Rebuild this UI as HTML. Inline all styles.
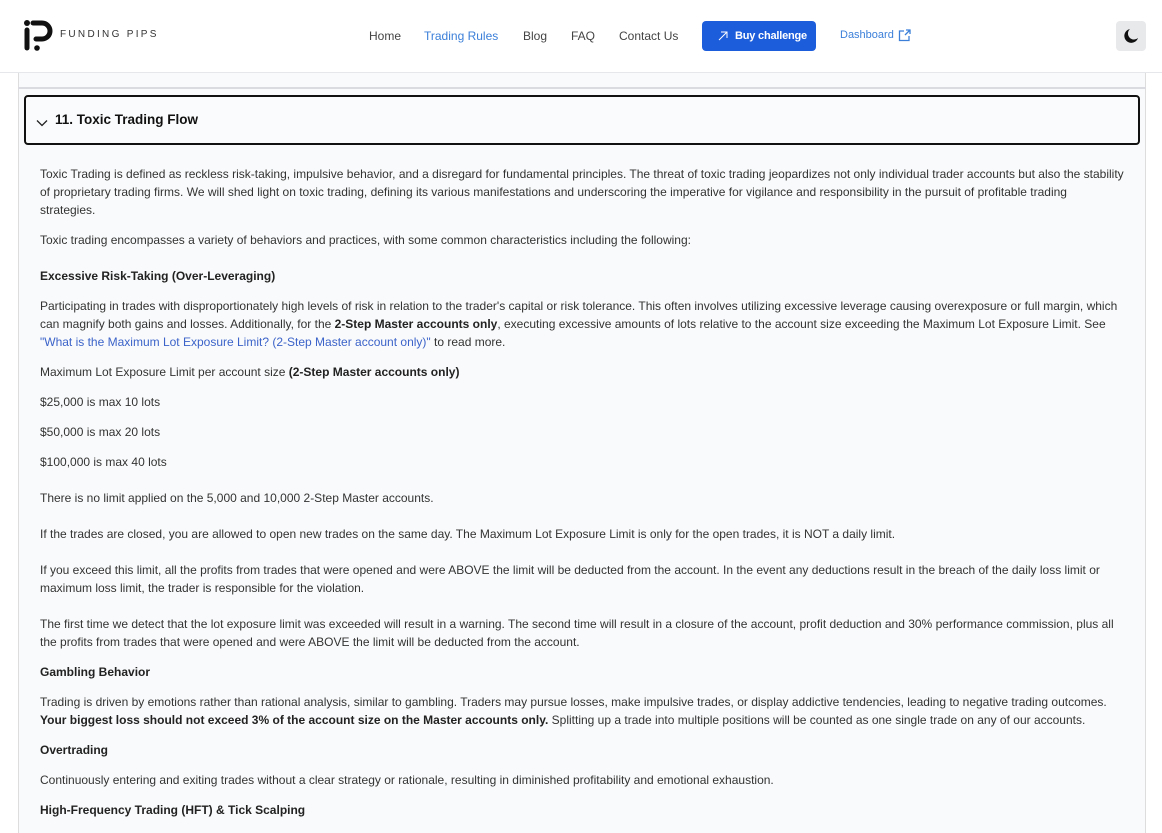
<!DOCTYPE html>
<html><head><meta charset="utf-8"><style>
*{margin:0;padding:0;box-sizing:border-box}
body{width:1162px;height:820px;overflow:hidden;background:#fff;font-family:"Liberation Sans",Arial,sans-serif;position:relative}
.hdr{position:absolute;left:0;top:0;width:1162px;height:73px;background:#fff;border-bottom:1px solid #e5e7eb}
.nav a{position:absolute;top:29px;font-size:12px;color:#444;text-decoration:none}
.box{position:absolute;left:18px;top:73px;width:1128px;height:760px;background:#f9fafb;border-left:1px solid #ddd;border-right:1px solid #ddd}
.line{position:absolute;left:18px;top:87px;width:1128px;height:2px;background:#d9dbe0}
.acc{position:absolute;left:24px;top:95px;width:1116px;height:50px;border:2px solid #111;border-radius:4px;background:#fafbfc}
.p{position:absolute;left:40px;font-size:12px;line-height:18px;color:#333;white-space:nowrap}
b{color:#222}
.lnk{color:#3b63c9}
</style></head><body>
<div class="hdr">
<svg style="position:absolute;left:24px;top:20px" width="30" height="32" viewBox="0 0 30 32">
<circle cx="3" cy="3" r="3" fill="#111"/>
<path d="M3 10 V28" stroke="#111" stroke-width="5" stroke-linecap="round" fill="none"/>
<path d="M9 3 H18 A8 8 0 0 1 18 19 H12" stroke="#111" stroke-width="5" stroke-linecap="round" fill="none"/>
<circle cx="13" cy="28" r="2.8" fill="#111"/>
</svg>
<div style="position:absolute;left:60px;top:29px;font-size:10px;letter-spacing:2.3px;color:#333">FUNDING PIPS</div>
<div class="nav">
<a style="left:369px">Home</a>
<a style="left:424px;color:#3b7fd9">Trading Rules</a>
<a style="left:523px">Blog</a>
<a style="left:571px">FAQ</a>
<a style="left:619px">Contact Us</a>
</div>
<div style="position:absolute;left:702px;top:21px;width:114px;height:30px;background:#1c5ddc;border-radius:4px;color:#fff;font-size:11px;font-weight:bold;line-height:30px;padding-left:33px;letter-spacing:-0.2px">Buy challenge</div>
<svg style="position:absolute;left:718px;top:31px" width="10" height="10" viewBox="0 0 10 10"><path d="M1 9 L9 1 M3 1 H9 V7" stroke="#fff" stroke-width="1" fill="none"/></svg>
<div style="position:absolute;left:840px;top:29px;font-size:11px;color:#3b7fd9">Dashboard</div>
<svg style="position:absolute;left:898px;top:29px" width="13" height="13" viewBox="0 0 13 13"><path d="M6 2 H1.5 V11.5 H11 V7 M7 6 L12 1 M8 1 H12 V5" stroke="#3b7fd9" stroke-width="1.3" fill="none"/></svg>
<div style="position:absolute;left:1116px;top:21px;width:30px;height:30px;background:#e8e9eb;border-radius:4px"></div>
<svg style="position:absolute;left:1123px;top:28px" width="16" height="16" viewBox="0 0 16 16"><path d="M7 1 A7 7 0 1 0 15 10 A6 6 0 0 1 7 1Z" fill="#111"/></svg>
</div>
<div class="box"></div>
<div class="line"></div>
<div class="acc">
<svg style="position:absolute;left:10px;top:22px" width="12" height="8" viewBox="0 0 12 8"><path d="M1 1.5 L6 6.5 L11 1.5" stroke="#222" stroke-width="1.3" fill="none"/></svg>
<div style="position:absolute;left:29px;top:15px;font-size:13.5px;font-weight:bold;color:#111">11. Toxic Trading Flow</div>
</div>
<div class="p" style="top:165px">Toxic Trading is defined as reckless risk-taking, impulsive behavior, and a disregard for fundamental principles. The threat of toxic trading jeopardizes not only individual trader accounts but also the stability<br>of proprietary trading firms. We will shed light on toxic trading, defining its various manifestations and underscoring the imperative for vigilance and responsibility in the pursuit of profitable trading<br>strategies.</div>
<div class="p" style="top:231px">Toxic trading encompasses a variety of behaviors and practices, with some common characteristics including the following:</div>
<div class="p" style="top:267px"><b>Excessive Risk-Taking (Over-Leveraging)</b></div>
<div class="p" style="top:297px">Participating in trades with disproportionately high levels of risk in relation to the trader's capital or risk tolerance. This often involves utilizing excessive leverage causing overexposure or full margin, which<br>can magnify both gains and losses. Additionally, for the <b>2-Step Master accounts only</b>, executing excessive amounts of lots relative to the account size exceeding the Maximum Lot Exposure Limit. See<br><span class="lnk">"What is the Maximum Lot Exposure Limit? (2-Step Master account only)"</span> to read more.</div>
<div class="p" style="top:363px">Maximum Lot Exposure Limit per account size <b>(2-Step Master accounts only)</b></div>
<div class="p" style="top:393px">$25,000 is max 10 lots</div>
<div class="p" style="top:423px">$50,000 is max 20 lots</div>
<div class="p" style="top:453px">$100,000 is max 40 lots</div>
<div class="p" style="top:489px">There is no limit applied on the 5,000 and 10,000 2-Step Master accounts.</div>
<div class="p" style="top:525px">If the trades are closed, you are allowed to open new trades on the same day. The Maximum Lot Exposure Limit is only for the open trades, it is NOT a daily limit.</div>
<div class="p" style="top:561px">If you exceed this limit, all the profits from trades that were opened and were ABOVE the limit will be deducted from the account. In the event any deductions result in the breach of the daily loss limit or<br>maximum loss limit, the trader is responsible for the violation.</div>
<div class="p" style="top:615px">The first time we detect that the lot exposure limit was exceeded will result in a warning. The second time will result in a closure of the account, profit deduction and 30% performance commission, plus all<br>the profits from trades that were opened and were ABOVE the limit will be deducted from the account.</div>
<div class="p" style="top:663px"><b>Gambling Behavior</b></div>
<div class="p" style="top:693px">Trading is driven by emotions rather than rational analysis, similar to gambling. Traders may pursue losses, make impulsive trades, or display addictive tendencies, leading to negative trading outcomes.<br><b>Your biggest loss should not exceed 3% of the account size on the Master accounts only.</b> Splitting up a trade into multiple positions will be counted as one single trade on any of our accounts.</div>
<div class="p" style="top:741px"><b>Overtrading</b></div>
<div class="p" style="top:771px">Continuously entering and exiting trades without a clear strategy or rationale, resulting in diminished profitability and emotional exhaustion.</div>
<div class="p" style="top:801px"><b>High-Frequency Trading (HFT) &amp; Tick Scalping</b></div>
</body></html>
